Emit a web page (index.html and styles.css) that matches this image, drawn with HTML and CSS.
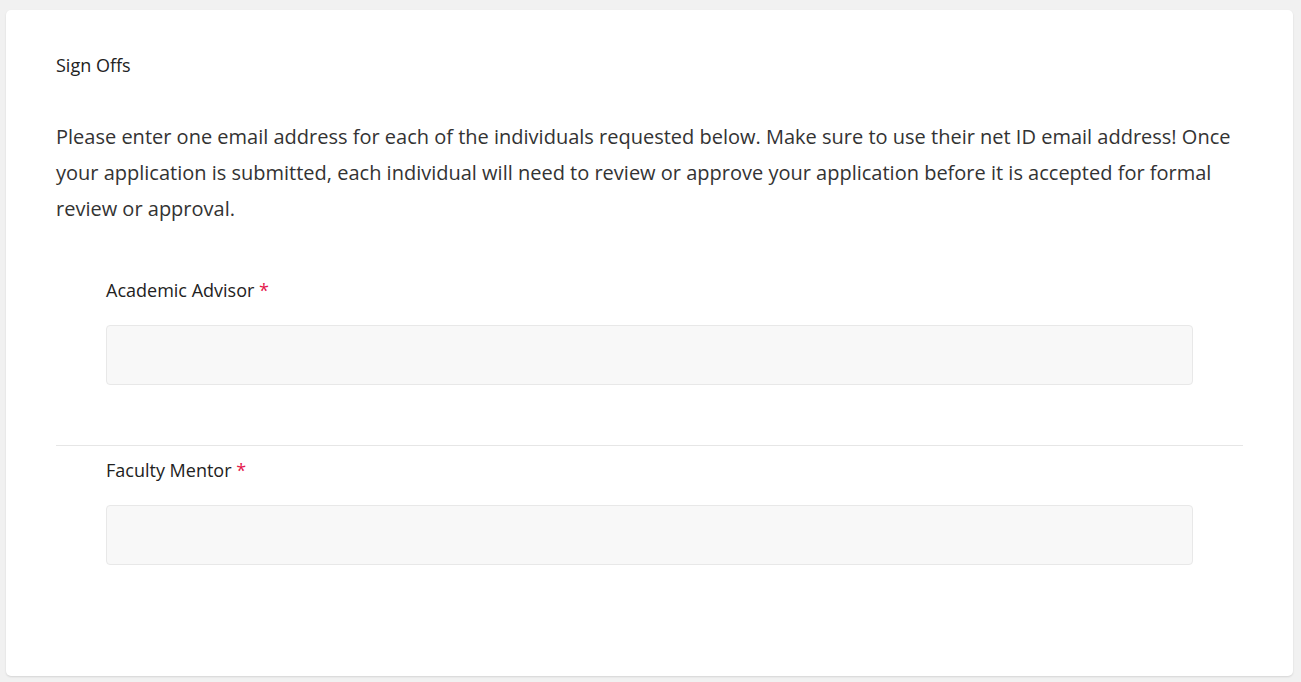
FILE: index.html
```html
<!DOCTYPE html>
<html>
<head>
<meta charset="utf-8">
<link rel="stylesheet" href="styles.css">
</head>
<body>
<div class="card">
  <h2 class="title">Sign Offs</h2>
  <p class="intro">Please enter one email address for each of the individuals requested below. Make sure to use their net ID email address! Once your application is submitted, each individual will need to review or approve your application before it is accepted for formal review or approval.</p>
  <div class="field">
    <label class="label">Academic Advisor <span class="req">*</span></label>
    <div class="input"></div>
  </div>
  <div class="field field-divided">
    <label class="label">Faculty Mentor <span class="req">*</span></label>
    <div class="input"></div>
  </div>
</div>
</body>
</html>
```
FILE: styles.css
```css
html, body {
  margin: 0;
  padding: 0;
  background: #f1f1f1;
  font-family: "Open Sans", "Liberation Sans", sans-serif;
  color: #333;
}
body {
  padding: 10px 8px 6px 6px;
}
.card {
  background: #fff;
  border-radius: 5px;
  box-shadow: 0 1px 2px rgba(0,0,0,0.12);
  padding: 43px 50px 112px 50px;
  height: 666px;
  box-sizing: border-box;
}
.title {
  margin: 0;
  font-size: 18px;
  font-weight: 400;
  line-height: 24px;
  color: #222;
}
.intro {
  margin: 42px 0 0 0;
  font-size: 20px;
  line-height: 36px;
  color: #333;
}
.field {
  padding: 0 50px;
}
.field:first-of-type {
  margin-top: 50px;
}
.label {
  display: block;
  font-size: 18px;
  line-height: 26px;
  color: #222;
}
.req {
  color: #e4174c;
}
.input {
  margin-top: 22px;
  height: 58px;
  background: #f8f8f8;
  border: 1px solid #e8e8e8;
  border-radius: 4px;
}
.field-divided {
  border-top: 1px solid #e6e6e6;
  margin-top: 60px;
  padding-top: 11px;
}
```
